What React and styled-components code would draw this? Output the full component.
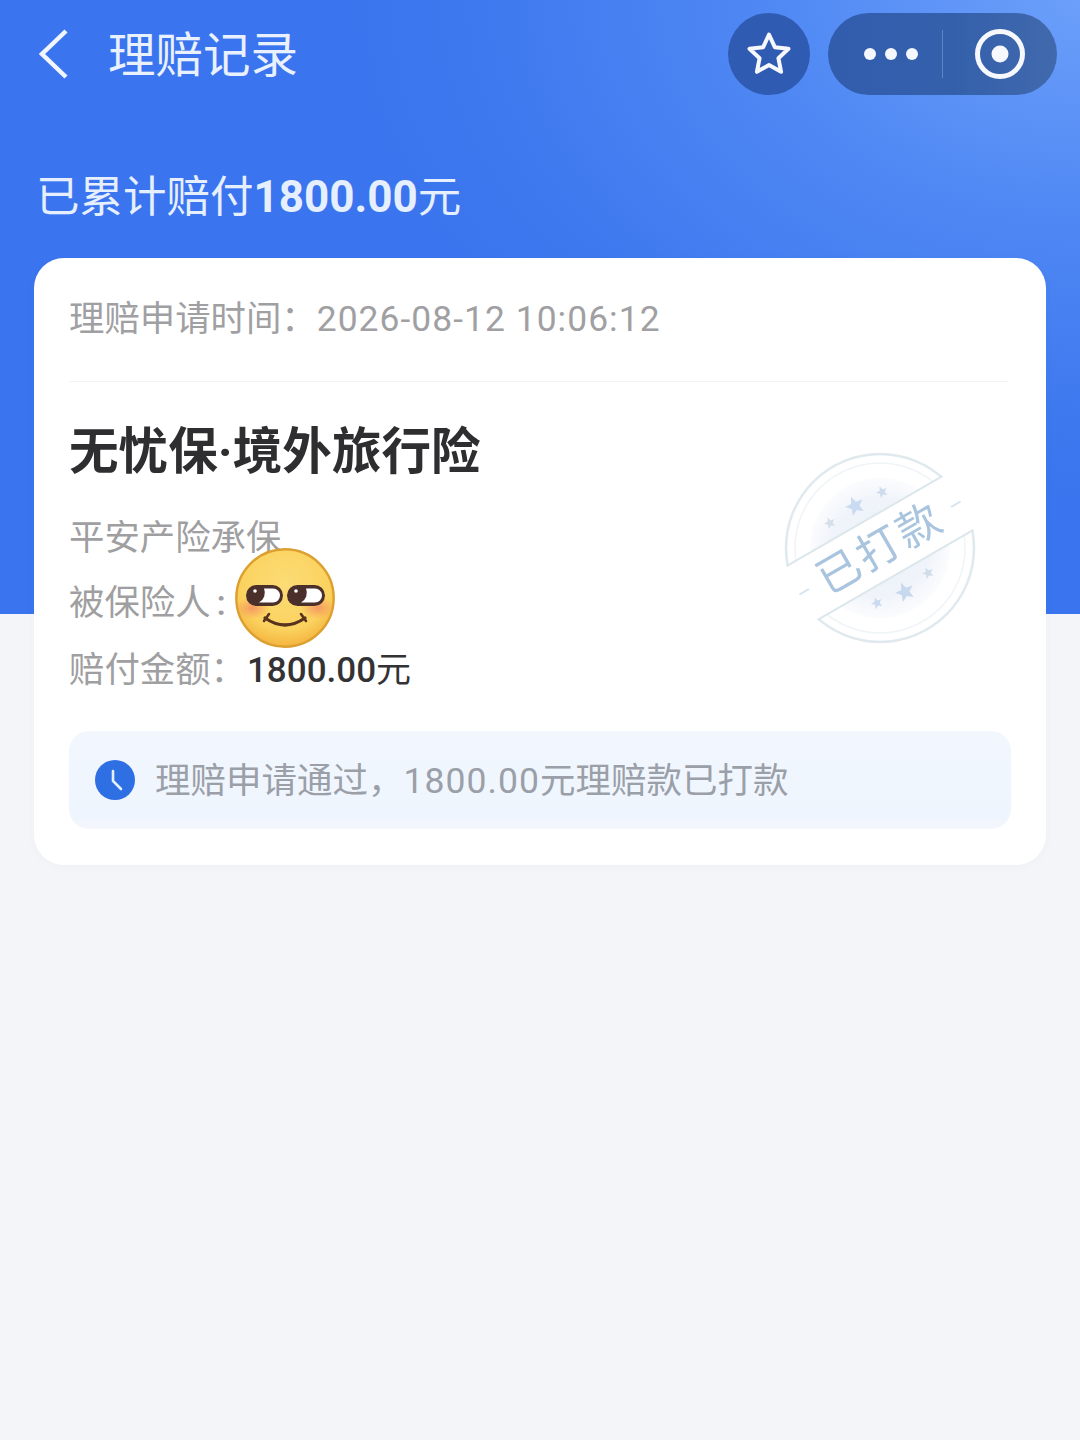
import React from 'react'
import styled, { createGlobalStyle } from 'styled-components'

const GlobalStyle = createGlobalStyle`
  html, body {
    margin: 0;
    padding: 0;
    background: #f4f5f8;
  }
  * {
    box-sizing: border-box;
  }
`

const Page = styled.div`
  width: 1080px;
  height: 1440px;
  overflow: hidden;
  background:
    radial-gradient(760px 520px at 100% 0, #6c9ffa 0%, #5089f4 40%, #3f79ef 78%, #3a74ee 100%) top / 100% 614px no-repeat,
    linear-gradient(#3a74ee, #3a74ee) top / 100% 614px no-repeat,
    #f4f5f8;
  font-family: Roboto, "Noto Sans CJK SC", sans-serif;
`

const NavBar = styled.header`
  display: flex;
  align-items: center;
  height: 82px;
  margin-top: 13px;
  padding: 0 23px 0 38px;
`

const BackButton = styled.svg`
  width: 32px;
  height: 50px;
  margin-right: 38px;
`

const NavTitle = styled.h1`
  flex: 1;
  margin: 0;
  padding-top: 3px;
  color: #e9f0fe;
  font-size: 47.5px;
  font-weight: 400;
  line-height: 82px;
`

const RoundButton = styled.div`
  display: flex;
  align-items: center;
  justify-content: center;
  width: 82px;
  height: 82px;
  margin-right: 18px;
  border-radius: 50%;
  background: #2f5bb2;
`

const Capsule = styled.div`
  display: flex;
  align-items: center;
  width: 229px;
  height: 82px;
  border-radius: 41px;
  background: linear-gradient(90deg, #325dae 0%, #3460ab 55%, #4169ad 100%);
`

const MoreDots = styled.div`
  display: flex;
  justify-content: center;
  gap: 9px;
  width: 114px;
  padding-left: 12px;
`

const Dot = styled.span`
  width: 12px;
  height: 12px;
  border-radius: 50%;
  background: #f4f7fd;
`

const CapsuleDivider = styled.span`
  width: 1px;
  height: 48px;
  background: #5f84c6;
`

const CapsuleTarget = styled.div`
  display: flex;
  flex: 1;
  justify-content: center;
`

const TotalLine = styled.div`
  margin-top: 72px;
  padding-left: 36px;
  color: #e6effe;
  font-size: 43.5px;
  line-height: 60px;
`

const TotalAmount = styled.strong`
  font-weight: 700;
  font-size: 44px;
`

const Card = styled.section`
  position: relative;
  width: 1012px;
  height: 607px;
  margin: 30px 0 0 34px;
  padding: 0 35px;
  border-radius: 30px;
  background: #fff;
  box-shadow: 0 2px 8px rgba(60, 80, 130, 0.03);
`

const ApplyTime = styled.div`
  height: 124px;
  margin-right: 3px;
  padding-top: 34px;
  border-bottom: 1px solid #f3f3f5;
  color: #a0a0a3;
  font-size: 35.4px;
  line-height: 54px;
`

const Digits = styled.span`
  letter-spacing: 1.05px;
`

const Product = styled.h2`
  margin: 38px 0 0;
  color: #2e2e30;
  font-size: 49.6px;
  font-weight: 700;
  line-height: 64px;
`

const InfoList = styled.div`
  margin-top: 21px;
`

const InfoRow = styled.div`
  position: relative;
  height: ${props => props.$height}px;
  color: #9f9fa2;
  font-size: 35.4px;
  line-height: 66px;
`

const Colon = styled.span`
  margin-left: 6px;
  font-weight: 500;
`

const InfoValue = styled.span`
  margin-left: ${props => props.$indent}px;
  color: #333336;
  font-size: 35px;
  font-weight: ${props => props.$weight};
`

const EmojiFace = styled.svg`
  position: absolute;
  left: 166px;
  top: -22px;
  width: 100px;
  height: 100px;
`

const Notice = styled.div`
  display: flex;
  align-items: center;
  gap: 20px;
  height: 98px;
  margin-top: 28px;
  padding: 0 0 5px 26px;
  border-radius: 20px;
  background: linear-gradient(180deg, #f2f7fe 0%, #eff5fe 88%, #f4f6fb 100%);
  color: #9a9fa8;
  font-size: 35.5px;
`

const NoticeIcon = styled.svg`
  flex: none;
  margin-top: 5px;
`

const Stamp = styled.svg`
  position: absolute;
  left: 746px;
  top: 190px;
  width: 200px;
  height: 200px;
  filter: blur(0.6px);
`

const StampLabel = styled.text`
  fill: #a9c4de;
  font-family: "Noto Sans CJK SC", sans-serif;
  font-size: 43px;
  font-weight: 400;
`

const star = 'M0 -10 L2.6 -3.4 L9.5 -3 L4.2 1.4 L5.9 8.2 L0 4.4 L-5.9 8.2 L-4.2 1.4 L-9.5 -3 L-2.6 -3.4 Z'

function StampMark() {
  return (
    <Stamp viewBox="0 0 200 200">
      <defs>
        <radialGradient id="stampCore">
          <stop offset="0" stopColor="#eaf0f9" />
          <stop offset="0.7" stopColor="#f0f4fa" />
          <stop offset="1" stopColor="#fbfcfe" />
        </radialGradient>
      </defs>
      <circle cx="100" cy="100" r="70" fill="url(#stampCore)" />
      <circle cx="100" cy="100" r="94" fill="none" stroke="#dfe9ee" strokeWidth="2.5" />
      <circle cx="100" cy="100" r="85" fill="none" stroke="#eff4f7" strokeWidth="1.5" />
      <path d={star} transform="translate(75 58) rotate(-24)" fill="#c8dbf2" />
      <path d={star} transform="translate(102 44) rotate(-24) scale(0.6)" fill="#ccdcee" />
      <path d={star} transform="translate(50 75) rotate(-24) scale(0.6)" fill="#d4dfe9" />
      <path d={star} transform="translate(125 144) rotate(-24)" fill="#c8d8ee" />
      <path d={star} transform="translate(97 155) rotate(-24) scale(0.6)" fill="#ccdaf0" />
      <path d={star} transform="translate(148 125) rotate(-24) scale(0.6)" fill="#d0dde8" />
      <g transform="rotate(-30 100 100)">
        <rect x="-12" y="69" width="224" height="62" fill="#fff" />
        <line x1="10" y1="69" x2="190" y2="69" stroke="#dce7ec" strokeWidth="2" />
        <line x1="10" y1="131" x2="190" y2="131" stroke="#dce7ec" strokeWidth="2" />
        <line x1="7" y1="100" x2="18" y2="100" stroke="#d5e3ee" strokeWidth="2" />
        <line x1="182" y1="100" x2="193" y2="100" stroke="#d5e3ee" strokeWidth="2" />
        <StampLabel x="100" y="115" textAnchor="middle" letterSpacing="3">已打款</StampLabel>
      </g>
    </Stamp>
  )
}

function SmileEmoji() {
  return (
    <EmojiFace viewBox="0 0 100 100">
      <defs>
        <radialGradient id="faceFill" cx="0.5" cy="0.36" r="0.68">
          <stop offset="0" stopColor="#fcdc76" />
          <stop offset="0.68" stopColor="#fbd25f" />
          <stop offset="1" stopColor="#f2ae38" />
        </radialGradient>
        <radialGradient id="blush">
          <stop offset="0" stopColor="#f58f62" stopOpacity="0.85" />
          <stop offset="1" stopColor="#f58f62" stopOpacity="0" />
        </radialGradient>
      </defs>
      <circle cx="50" cy="50" r="48.7" fill="url(#faceFill)" stroke="#dca030" strokeWidth="2.4" />
      <ellipse cx="17" cy="60" rx="17" ry="11" fill="url(#blush)" />
      <ellipse cx="83" cy="60" rx="17" ry="11" fill="url(#blush)" />
      <rect x="11" y="37" width="37" height="21" rx="10.5" fill="#4a2f2a" />
      <rect x="52" y="37" width="38" height="21" rx="10.5" fill="#4a2f2a" />
      <path d="M29 40.5 h9 a7 7 0 0 1 0 14 h-14 a11 11 0 0 0 5 -14 Z" fill="#fff" />
      <path d="M71 40.5 h9 a7 7 0 0 1 0 14 h-14 a11 11 0 0 0 5 -14 Z" fill="#fff" />
      <circle cx="20" cy="43" r="1.8" fill="#fff" />
      <circle cx="61" cy="43" r="1.8" fill="#fff" />
      <path d="M30 70 Q50 84 70 70" fill="none" stroke="#57331f" strokeWidth="3.2" strokeLinecap="round" />
      <path d="M29 73 L34 66 M71 73 L66 66" stroke="#57331f" strokeWidth="2.6" strokeLinecap="round" />
    </EmojiFace>
  )
}

export default function App() {
  return (
    <Page>
      <GlobalStyle />
      <NavBar>
        <BackButton viewBox="0 0 32 50">
          <path d="M28 2 L4 25 L28 48" fill="none" stroke="#f0f5fe" strokeWidth="4.5" />
        </BackButton>
        <NavTitle>理赔记录</NavTitle>
        <RoundButton>
          <svg width="48" height="48" viewBox="0 0 48 48">
            <path
              d="M24 4.5 L29.8 17.2 L43.5 18.8 L33.4 28.2 L36.1 41.8 L24 35 L11.9 41.8 L14.6 28.2 L4.5 18.8 L18.2 17.2 Z"
              fill="none"
              stroke="#f6f8fd"
              strokeWidth="4"
              strokeLinejoin="round"
            />
          </svg>
        </RoundButton>
        <Capsule>
          <MoreDots>
            <Dot />
            <Dot />
            <Dot />
          </MoreDots>
          <CapsuleDivider />
          <CapsuleTarget>
            <svg width="52" height="52" viewBox="0 0 52 52">
              <circle cx="26" cy="26" r="22.5" fill="none" stroke="#f6f8fd" strokeWidth="5" />
              <circle cx="26" cy="26" r="8.5" fill="#f6f8fd" />
            </svg>
          </CapsuleTarget>
        </Capsule>
      </NavBar>
      <TotalLine>
        已累计赔付<TotalAmount>1800.00</TotalAmount>元
      </TotalLine>
      <Card>
        <ApplyTime>
          理赔申请时间：<Digits>2026-08-12 10:06:12</Digits>
        </ApplyTime>
        <Product>无忧保·境外旅行险</Product>
        <InfoList>
          <InfoRow $height={65}>平安产险承保</InfoRow>
          <InfoRow $height={67}>
            被保险人<Colon>:</Colon>
            <SmileEmoji />
          </InfoRow>
          <InfoRow $height={66}>
            赔付金额：<InfoValue $weight={500} $indent={1}>1800.00</InfoValue>
            <InfoValue $weight={400} $indent={0}>元</InfoValue>
          </InfoRow>
        </InfoList>
        <Notice>
          <NoticeIcon width="40" height="40" viewBox="0 0 40 40">
            <circle cx="20" cy="20" r="20" fill="#2f6fe4" />
            <path d="M18 11 V21 L26 29" fill="none" stroke="#e6effc" strokeWidth="2.6" strokeLinecap="round" />
          </NoticeIcon>
          <span>
            理赔申请通过，<Digits>1800.00</Digits>元理赔款已打款
          </span>
        </Notice>
        <StampMark />
      </Card>
    </Page>
  )
}
